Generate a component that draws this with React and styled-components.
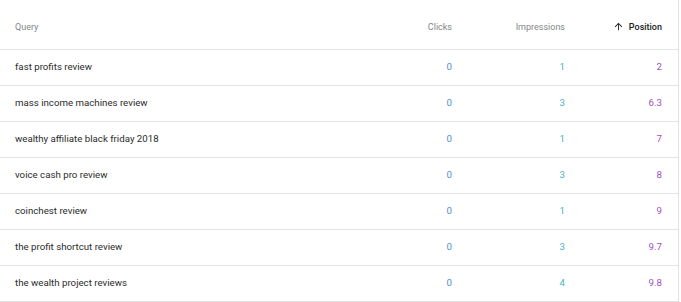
import React from "react";
import styled, { createGlobalStyle } from "styled-components";

const GlobalStyle = createGlobalStyle`
  body {
    margin: 0;
    background: #ffffff;
    font-family: Roboto, "Liberation Sans", Arial, sans-serif;
  }
`;

const rows = [
  { query: "fast profits review", clicks: 0, impressions: 1, position: "2" },
  { query: "mass income machines review", clicks: 0, impressions: 3, position: "6.3" },
  { query: "wealthy affiliate black friday 2018", clicks: 0, impressions: 1, position: "7" },
  { query: "voice cash pro review", clicks: 0, impressions: 3, position: "8" },
  { query: "coinchest review", clicks: 0, impressions: 1, position: "9" },
  { query: "the profit shortcut review", clicks: 0, impressions: 3, position: "9.7" },
  { query: "the wealth project reviews", clicks: 0, impressions: 4, position: "9.8" },
];

const Table = styled.div`
  width: 679px;
  border-right: 1px solid #e3e3e3;
  box-sizing: border-box;
`;

const Row = styled.div`
  display: grid;
  grid-template-columns: 1fr 100px 113px 97px;
  align-items: center;
  height: ${(p) => (p.head ? "50px" : "36px")};
  padding: ${(p) => (p.head ? "4px 16px 0 15px" : "0 16px 3px 15px")};
  box-sizing: border-box;
  border-bottom: 1px solid #e3e3e3;
`;

const HeadCell = styled.div`
  font-size: 9px;
  color: ${(p) => (p.active ? "#202124" : "#80868b")};
  font-weight: ${(p) => (p.active ? 500 : 400)};
  display: flex;
  align-items: center;
  justify-content: ${(p) => (p.right ? "flex-end" : "flex-start")};
  gap: 5px;
`;

const Cell = styled.div`
  font-size: 9.7px;
  color: ${(p) => p.color || "#2b2b2b"};
  text-align: ${(p) => (p.right ? "right" : "left")};
`;

const Arrow = () => (
  <svg width="11" height="11" viewBox="0 0 24 24">
    <path
      d="M4 12l1.41 1.41L11 7.83V20h2V7.83l5.58 5.59L20 12l-8-8-8 8z"
      fill="#202124"
    />
  </svg>
);

export default function App() {
  return (
    <>
      <GlobalStyle />
      <Table>
        <Row head>
          <HeadCell>Query</HeadCell>
          <HeadCell right>Clicks</HeadCell>
          <HeadCell right>Impressions</HeadCell>
          <HeadCell right active>
            <Arrow />
            Position
          </HeadCell>
        </Row>
        {rows.map((r, i) => (
          <Row key={i}>
            <Cell>{r.query}</Cell>
            <Cell right color="#4d8fd6">{r.clicks}</Cell>
            <Cell right color="#4cb5c3">{r.impressions}</Cell>
            <Cell right color="#9b51c4">{r.position}</Cell>
          </Row>
        ))}
      </Table>
    </>
  );
}
